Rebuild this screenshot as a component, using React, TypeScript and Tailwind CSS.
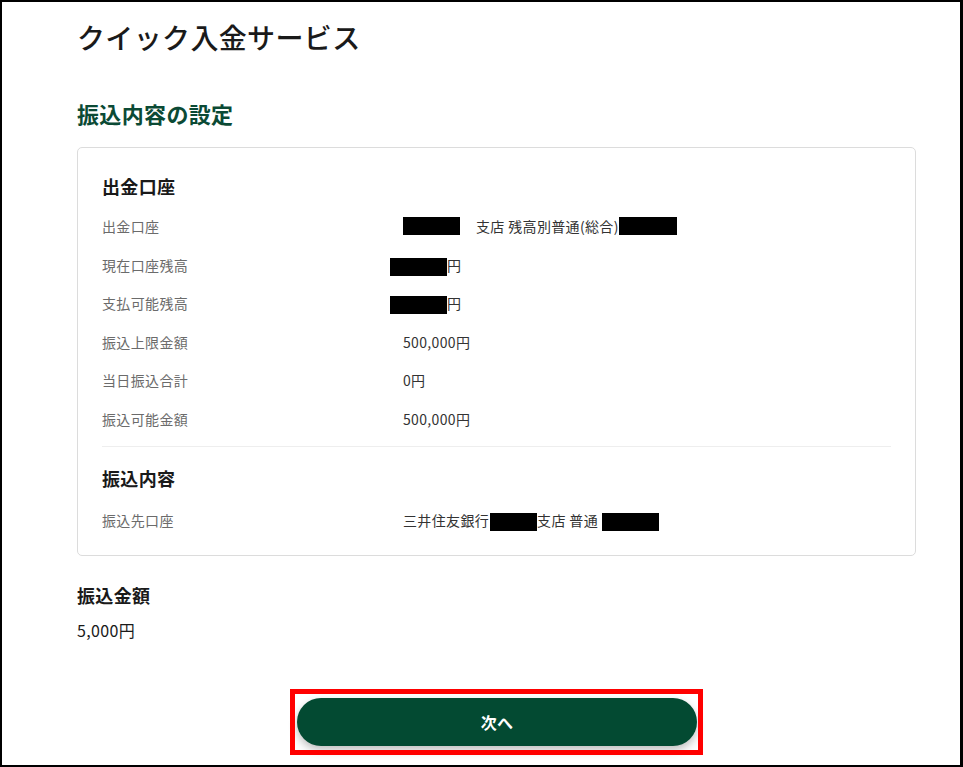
export default function App() {
  const box = (w: number) => (
    <span className="inline-block h-[18px] bg-black align-middle" style={{ width: w }} />
  );

  const sourceRows: { label: string; value: React.ReactNode }[] = [
    {
      label: "出金口座",
      value: (
        <>
          {box(57)}
          <span className="ml-[16px]">支店 残高別普通(総合)</span>
          {box(58)}
        </>
      ),
    },
    {
      label: "現在口座残高",
      value: (
        <span className="-ml-[13px]">
          {box(57)}円
        </span>
      ),
    },
    {
      label: "支払可能残高",
      value: (
        <span className="-ml-[13px]">
          {box(57)}円
        </span>
      ),
    },
    { label: "振込上限金額", value: "500,000円" },
    { label: "当日振込合計", value: "0円" },
    { label: "振込可能金額", value: "500,000円" },
  ];

  const Row = ({ label, value }: { label: string; value: React.ReactNode }) => (
    <div className="flex items-center h-[38.5px] text-[14px] leading-[22px]">
      <div className="w-[301px] shrink-0 text-[#6b6b6b]">{label}</div>
      <div className="flex items-center text-[#333]">{value}</div>
    </div>
  );

  return (
    <div className="w-[963px] h-[767px] border-2 border-r-[3px] border-black bg-white overflow-hidden tracking-[0.35px] font-['Noto_Sans_CJK_JP','Noto_Sans',sans-serif]">
      <div className="pl-[75px] pt-[15px] w-[914px]">
        {/* page title */}
        <h1 className="text-[28px] leading-[40px] font-medium text-[#1a1a1a]">クイック入金サービス</h1>

        <h2 className="mt-[40px] text-[22px] leading-[32px] font-bold text-[#0b4a35]">振込内容の設定</h2>

        {/* details card */}
        <div className="mt-[18px] w-[839px] border border-[#dcdcdc] rounded-[5px] px-[24px] pt-[25px] pb-[15px]">
          <h3 className="text-[18px] leading-[26px] font-bold text-[#1a1a1a]">出金口座</h3>
          <div className="mt-[8px] flex flex-col">
            {sourceRows.map((r) => (
              <Row key={r.label} label={r.label} value={r.value} />
            ))}
          </div>

          <div className="mt-[8px] h-px bg-[#eeeeee]"></div>

          <h3 className="mt-[18px] text-[18px] leading-[26px] font-bold text-[#1a1a1a]">振込内容</h3>
          <div className="mt-[10px]">
            <Row
              label="振込先口座"
              value={
                <>
                  三井住友銀行
                  <span className="ml-px">{box(47)}</span>
                  支店 普通
                  <span className="ml-[4px]">{box(57)}</span>
                </>
              }
            />
          </div>
        </div>

        {/* amount */}
        <h3 className="mt-[26px] text-[18px] leading-[26px] font-bold text-[#1a1a1a]">振込金額</h3>
        <p className="mt-[10px] text-[16px] leading-[24px] text-[#1a1a1a]">5,000円</p>

        <div className="mt-[56px] w-[839px] flex justify-center">
          <div className="relative ml-[1px]">
            <button className="w-[400px] h-[48px] rounded-full bg-[#034a32] text-white text-[16px] font-bold shadow-[0_4px_8px_rgba(0,0,0,0.25)]">
              次へ
            </button>
            <div className="absolute -left-[7px] -right-[6px] -top-[9px] -bottom-[9px] border-[5px] border-[#ff0000] pointer-events-none"></div>
          </div>
        </div>
      </div>
    </div>
  );
}
